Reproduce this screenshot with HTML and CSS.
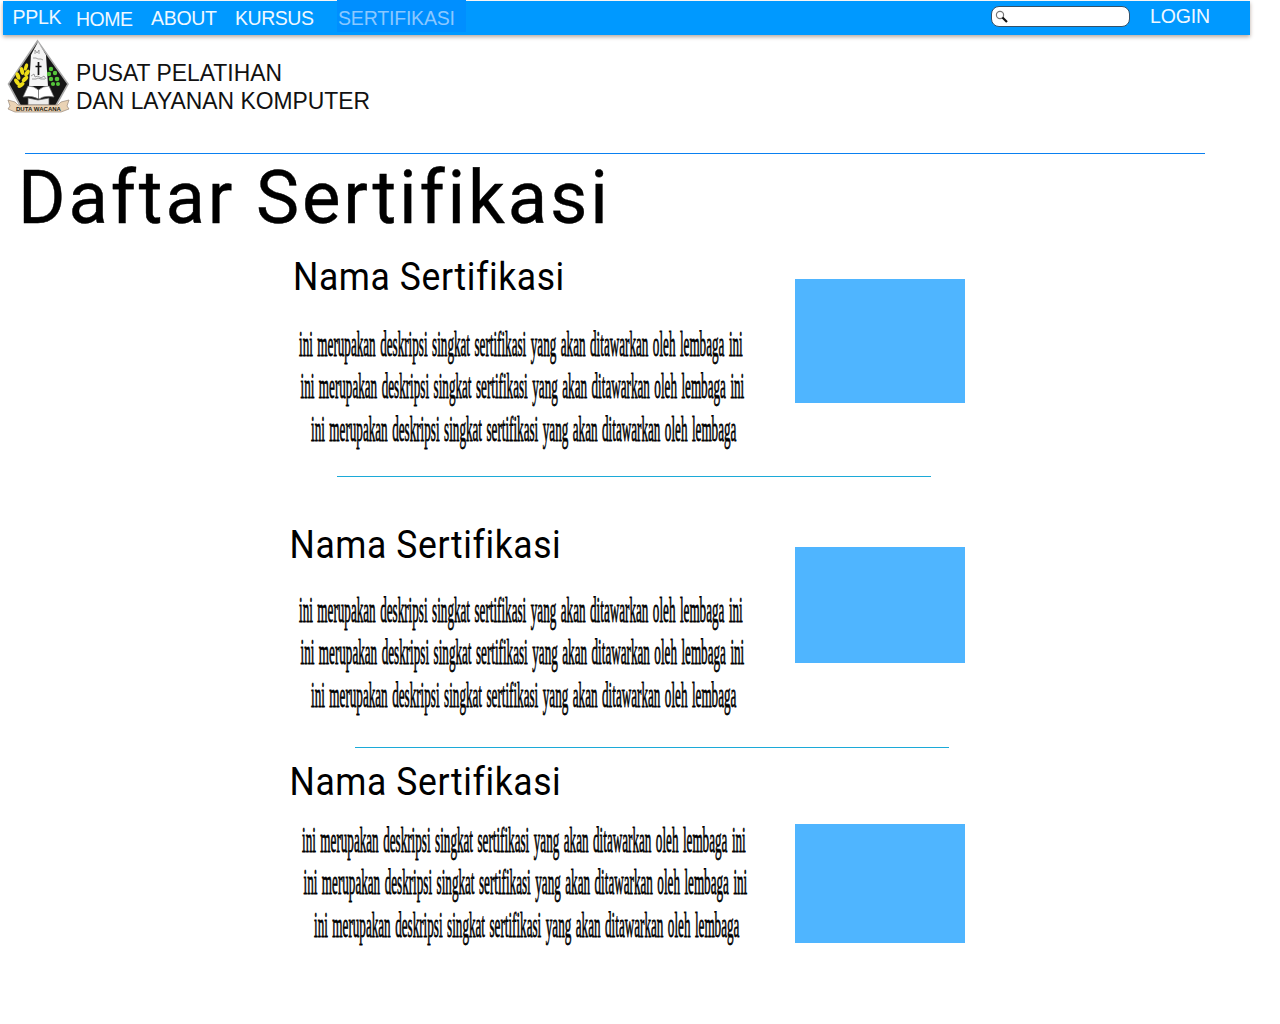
FILE: index.html
```html
<!DOCTYPE html>
<html lang="id">
<head>
<meta charset="utf-8">
<title>Daftar Sertifikasi</title>
<link rel="stylesheet" href="styles.css">
</head>
<body>
<nav class="navbar">
  <svg class="menu" width="480" height="34" viewBox="3 1 480 34">
    <text x="12.500" y="24" textLength="49">PPLK</text>
    <text x="76" y="26" textLength="57">HOME</text>
    <text x="151" y="25" textLength="66">ABOUT</text>
    <text x="235" y="25" textLength="79">KURSUS</text>
    <rect class="active" x="337" y="0" width="129" height="32"/>
    <text class="current" x="338" y="25" textLength="117">SERTIFIKASI</text>
  </svg>
  <div class="search">
    <svg width="16" height="16" viewBox="0 0 16 16"><circle cx="6" cy="6" r="3.600" fill="#fff" stroke="#777" stroke-width="1.2"/><path d="M8.500 8.500 13 13" stroke="#111" stroke-width="2.2"/></svg>
  </div>
  <svg class="login" width="64" height="34" viewBox="1148 1 64 34"><text x="1150" y="23" textLength="60">LOGIN</text></svg>
</nav>
<header class="brand">
  <svg class="crest" width="64" height="76" viewBox="6 38 64 76">
    <path d="M37.500 41 68 84 54 109H22L8.500 84Z" fill="#161616" stroke="#aaa" stroke-width="1.6"/>
    <path d="M38 42 46 55 48 86H29L31 55Z" fill="#f5f5f5"/>
    <g stroke="#888" stroke-width=".8" fill="none"><path d="M35 54v-4l2 3 2-3v4M33 58h3l2 1h3l2 1M31 76l3-2 1 3 3-1 3 2 3-2 2 3M32 79h4l2-1 3 1h4"/></g>
    <path d="M38.500 62v13M35.500 66.500h6" stroke="#111" stroke-width="1.7"/>
    <g fill="#eedd17"><ellipse cx="26" cy="67" rx="1.8" ry="3.8" transform="rotate(18 26 67)"/><ellipse cx="22" cy="71" rx="2" ry="4" transform="rotate(-15 22 71)"/><ellipse cx="27" cy="73" rx="2" ry="3.800" transform="rotate(35 27 73)"/><ellipse cx="18" cy="76" rx="2" ry="4" transform="rotate(-20 18 76)"/><ellipse cx="25" cy="79" rx="2" ry="4" transform="rotate(45 25 79)"/><ellipse cx="17" cy="82" rx="2" ry="4" transform="rotate(-35 17 82)"/><ellipse cx="21" cy="85" rx="2" ry="4" transform="rotate(55 21 85)"/></g>
    <g fill="#55c63b"><circle cx="51" cy="69" r="2.200"/><circle cx="49" cy="74" r="2.200"/><circle cx="55" cy="73" r="2.200"/><circle cx="51" cy="79" r="2.200"/><circle cx="57" cy="79" r="2.300"/><circle cx="53" cy="84" r="2.100"/><circle cx="58" cy="84" r="2"/></g>
    <path d="M28 86Q34 86 38.500 90Q43 86 49 86L54 97Q45 95 39 99Q32 95 23 97Z" fill="#fff" stroke="#777" stroke-width=".7"/>
    <path d="M38.500 90v9M28 98l10 2 11-2v7H28Z" fill="#eee" stroke="#555" stroke-width=".7"/>
    <path d="M8 100 15 102 18 105H58L61 102 69 100 67 106 69 109 61 112H15L8 109 10 106Z" fill="#ead3b5" stroke="#968778" stroke-width=".7"/>
    <text class="ribbon" x="16" y="110.500" textLength="45" lengthAdjust="spacingAndGlyphs">DUTA WACANA</text>
  </svg>
  <svg class="wordmark" width="310" height="62" viewBox="70 58 310 62">
    <text x="76" y="81" textLength="206" lengthAdjust="spacingAndGlyphs">PUSAT PELATIHAN</text>
    <text x="76" y="109" textLength="294" lengthAdjust="spacingAndGlyphs">DAN LAYANAN KOMPUTER</text>
  </svg>
</header>
<main>
  <hr class="top-rule">
  <h1><svg width="620" height="80" viewBox="0 154 620 80"><text transform="translate(18 223) scale(.98 1)" textLength="602">Daftar Sertifikasi</text></svg></h1>
  <section class="course first">
    <div class="copy">
      <svg width="490" height="220" viewBox="280 250 490 220">
        <text class="name" transform="translate(293 290) scale(.91 1)" textLength="298">Nama Sertifikasi</text>
        <g class="desc"><text transform="translate(299 355.500) scale(.365 1)">ini merupakan deskripsi singkat sertifikasi yang akan ditawarkan oleh lembaga ini</text>
        <text transform="translate(300.500 398.300) scale(.365 1)">ini merupakan deskripsi singkat sertifikasi yang akan ditawarkan oleh lembaga ini</text>
        <text transform="translate(311 441) scale(.365 1)">ini merupakan deskripsi singkat sertifikasi yang akan ditawarkan oleh lembaga</text></g>
      </svg>
    </div>
    <div class="thumb"></div>
  </section>
  <hr class="rule">
  <section class="course second">
    <div class="copy">
      <svg width="490" height="220" viewBox="280 515 490 220">
        <text class="name" transform="translate(289.500 558) scale(.91 1)" textLength="298">Nama Sertifikasi</text>
        <g class="desc"><text transform="translate(299 621.500) scale(.365 1)">ini merupakan deskripsi singkat sertifikasi yang akan ditawarkan oleh lembaga ini</text>
        <text transform="translate(300.500 664.300) scale(.365 1)">ini merupakan deskripsi singkat sertifikasi yang akan ditawarkan oleh lembaga ini</text>
        <text transform="translate(311 707) scale(.365 1)">ini merupakan deskripsi singkat sertifikasi yang akan ditawarkan oleh lembaga</text></g>
      </svg>
    </div>
    <div class="thumb"></div>
  </section>
  <hr class="rule shifted">
  <section class="course third">
    <div class="copy">
      <svg width="490" height="220" viewBox="280 748 490 220">
        <text class="name" transform="translate(289.500 795) scale(.91 1)" textLength="298">Nama Sertifikasi</text>
        <g class="desc"><text transform="translate(302 851.500) scale(.365 1)">ini merupakan deskripsi singkat sertifikasi yang akan ditawarkan oleh lembaga ini</text>
        <text transform="translate(303.500 894.300) scale(.365 1)">ini merupakan deskripsi singkat sertifikasi yang akan ditawarkan oleh lembaga ini</text>
        <text transform="translate(314 937) scale(.365 1)">ini merupakan deskripsi singkat sertifikasi yang akan ditawarkan oleh lembaga</text></g>
      </svg>
    </div>
    <div class="thumb"></div>
  </section>
</main>
</body>
</html>
```
FILE: styles.css
```css
* { box-sizing: border-box; }
body { margin: 0; padding-top: 1px; height: 1024px; overflow: hidden; background: #fff; }
svg { display: block; overflow: visible; }
.navbar { display: flex; width: 1247px; height: 34px; margin: 0 0 1px 3px; background: #0099ff; box-shadow: 0 2px 4px #b8a9a0; }
.navbar text { font: 19.5px "Liberation Sans", sans-serif; fill: #eff8ff; }
.navbar .current { fill: #8bc8ff; }
.active { fill: #008fff; }
.search { width: 139px; height: 21px; margin: 5px 0 0 508px; padding: 2px 2px; border: 1.5px solid #34526b; border-radius: 8px; background: #fff; }
.login { margin-left: 18px; }
.brand { display: flex; height: 117px; padding: 2px 0 0 6px; }
.wordmark { margin-top: 20px; }
.wordmark text { font: 24px "Liberation Sans", sans-serif; fill: #111; }
.ribbon { font: bold 6px "Liberation Sans", sans-serif; fill: #251a12; }
hr { height: 1px; margin: 0; border: 0; background: #1caad8; }
.top-rule { width: 1180px; margin-left: 25px; background: #0a80f0; }
h1 { height: 80px; margin: 0; }
h1 text { font: 74px Roboto, sans-serif; font-variant-ligatures: none; stroke: #000; stroke-width: .4px; }
.name { font: 39px Roboto, sans-serif; font-variant-ligatures: none; }
.desc { font: 36px "Liberation Serif", serif; word-spacing: 3.3px; font-variant-ligatures: none; stroke: #000; stroke-width: .8px; }
.course { display: flex; align-items: flex-start; padding-left: 280px; }
.copy { width: 515px; }
.thumb { width: 170px; height: 124px; background: #4fb5ff; }
.first { height: 242px; padding-top: 16px; }
.first .thumb { margin-top: 29px; }
.rule { width: 594px; margin-left: 337px; }
.rule.shifted { margin-left: 355px; }
.second { height: 270px; padding-top: 38px; }
.second .thumb { height: 116px; margin-top: 32px; }
.third { height: 230px; }
.third .thumb { height: 119px; margin-top: 76px; }
```
